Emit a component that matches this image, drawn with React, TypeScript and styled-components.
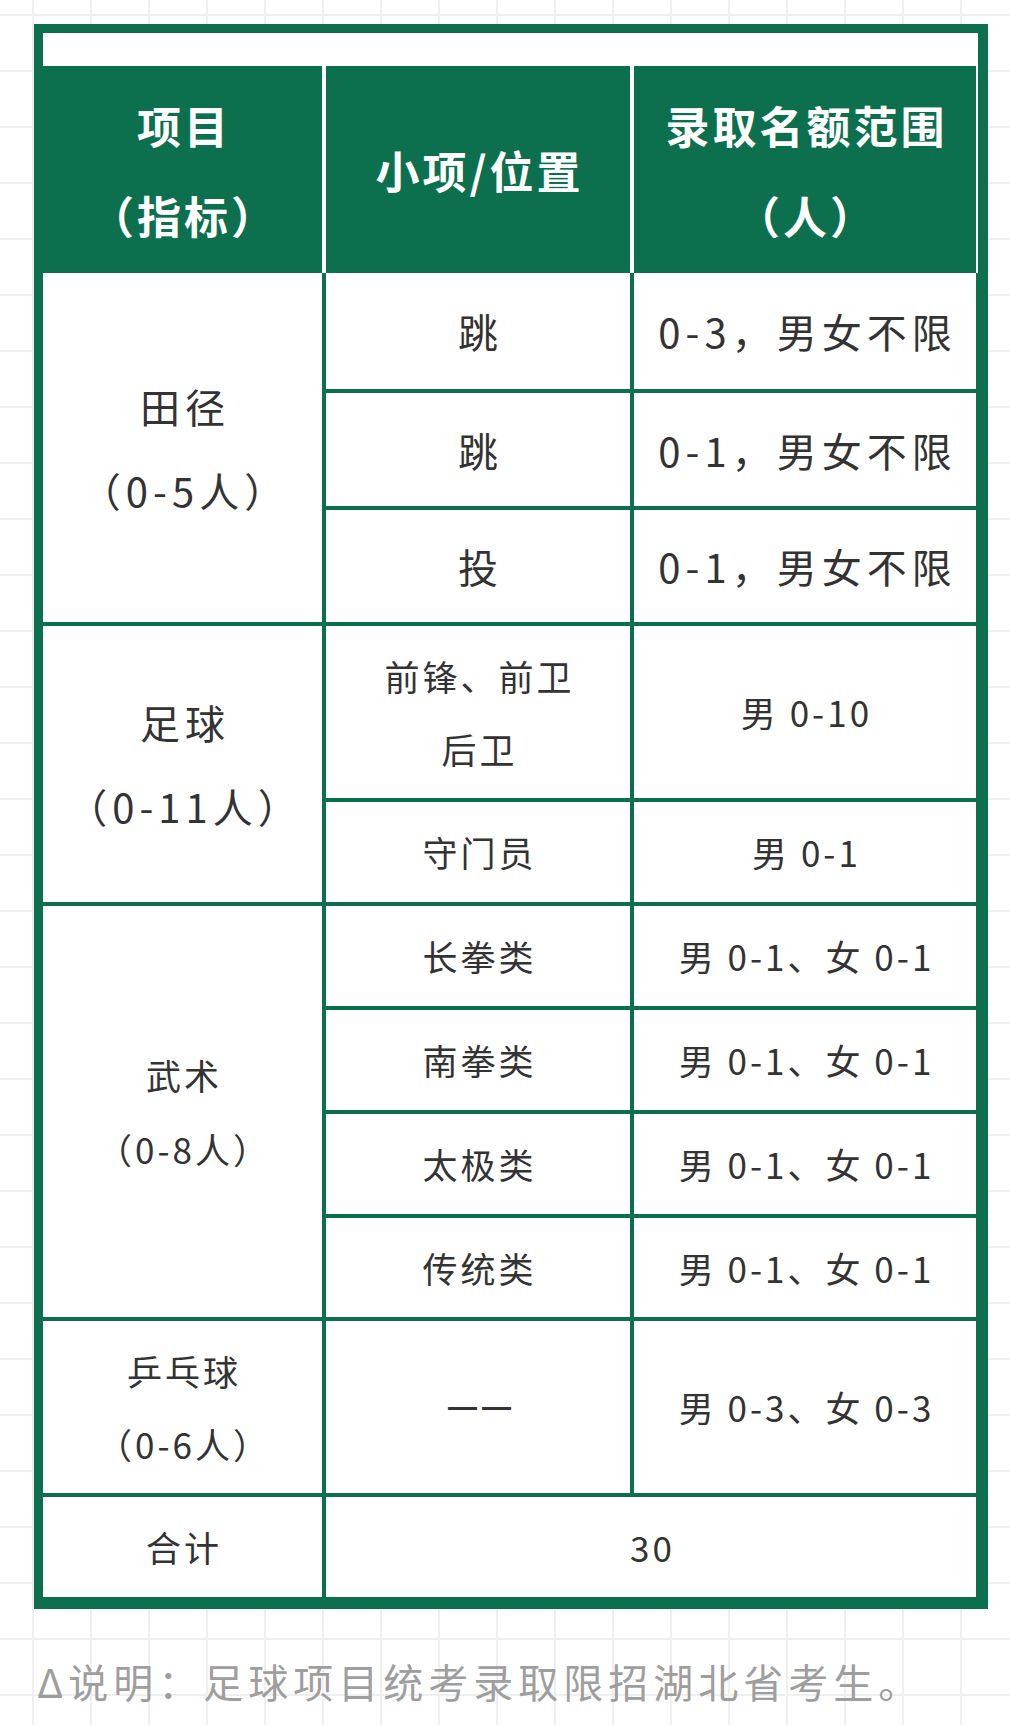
import React from "react"
import styled, { createGlobalStyle } from "styled-components"

const green = "#0c6f4d"

const GlobalStyle = createGlobalStyle`
  html, body {
    margin: 0;
    padding: 0;
  }
  body {
    min-height: 1725px;
    background-color: #fff;
    background-image:
      linear-gradient(to right, #efefef 2px, transparent 2px),
      linear-gradient(to bottom, #efefef 2px, transparent 2px);
    background-size: 58px 56px;
    background-position: 32px 14px;
    font-family: "Noto Sans CJK SC", "Noto Sans", sans-serif;
  }
`

type Row = { sub: string[]; quota: string[] }
type Group = { name: string[]; size: number; subSize: number; rows: Row[] }

const groups: Group[] = [
  {
    name: ["田径", "（0-5人）"],
    size: 40,
    subSize: 40,
    rows: [
      { sub: ["跳"], quota: ["0-3，男女不限"] },
      { sub: ["跳"], quota: ["0-1，男女不限"] },
      { sub: ["投"], quota: ["0-1，男女不限"] },
    ],
  },
  {
    name: ["足球", "（0-11人）"],
    size: 40,
    subSize: 35,
    rows: [
      { sub: ["前锋、前卫", "后卫"], quota: ["男 0-10"] },
      { sub: ["守门员"], quota: ["男 0-1"] },
    ],
  },
  {
    name: ["武术", "（0-8人）"],
    size: 35,
    subSize: 35,
    rows: [
      { sub: ["长拳类"], quota: ["男 0-1、女 0-1"] },
      { sub: ["南拳类"], quota: ["男 0-1、女 0-1"] },
      { sub: ["太极类"], quota: ["男 0-1、女 0-1"] },
      { sub: ["传统类"], quota: ["男 0-1、女 0-1"] },
    ],
  },
  {
    name: ["乒乓球", "（0-6人）"],
    size: 35,
    subSize: 35,
    rows: [{ sub: ["——"], quota: ["男 0-3、女 0-3"] }],
  },
]

const Lines = ({ lines }: { lines: string[] }) => (
  <>
    {lines.map((l, i) =>
      l === "——" ? <Dash key={i}>{l}</Dash> : <Line key={i}>{l}</Line>
    )}
  </>
)

export default function App() {
  return (
    <>
      <GlobalStyle />
      <Page>
        <Frame>
          <HeaderRow>
            <HeadCell>
              <Lines lines={["项目", "（指标）"]} />
            </HeadCell>
            <HeadCell>
              <Lines lines={["小项/位置"]} />
            </HeadCell>
            <HeadCell>
              <Lines lines={["录取名额范围", "（人）"]} />
            </HeadCell>
          </HeaderRow>
          <Body>
            {groups.map((g, gi) => (
              <React.Fragment key={gi}>
                <Cell $col={1} $rows={g.rows.length} $size={g.size}>
                  <Lines lines={g.name} />
                </Cell>
                {g.rows.map((r, ri) => (
                  <React.Fragment key={ri}>
                    <Cell $col={2} $size={g.subSize}>
                      <Lines lines={r.sub} />
                    </Cell>
                    <Cell $col={3} $size={g.subSize}>
                      <Lines lines={r.quota} />
                    </Cell>
                  </React.Fragment>
                ))}
              </React.Fragment>
            ))}
            <Cell $col={1} $size={35}>
              <Line>合计</Line>
            </Cell>
            <Cell $col={2} $cols={2} $size={35}>
              <Line>30</Line>
            </Cell>
          </Body>
        </Frame>
        <Note>Δ说明：足球项目统考录取限招湖北省考生。</Note>
      </Page>
    </>
  )
}

const Page = styled.div`
  box-sizing: border-box;
  min-height: 1725px;
  padding: 24px 0 0 34px;
`

const Frame = styled.div`
  box-sizing: border-box;
  width: 954px;
  border: solid ${green};
  border-width: 9px 10px 10px 9px;
  padding-top: 33px;
  background: #fff;
`

const columns = "279px 304px 342px"

const HeaderRow = styled.div`
  display: grid;
  grid-template-columns: ${columns};
  column-gap: 4px;
  height: 207px;
  padding-right: 2px;
  background: #fff;
`

const HeadCell = styled.div`
  display: flex;
  flex-direction: column;
  align-items: center;
  justify-content: center;
  background: ${green};
  color: #fff;
  font-size: 44px;
  font-weight: 700;
  line-height: 90px;
  letter-spacing: 3px;
  padding-left: 3px;
`

const Body = styled.div`
  display: grid;
  grid-template-columns: ${columns};
  grid-template-rows: 116px 113px 112px 172px 100px 100px 100px 100px 99px 172px 100px;
  gap: 4px;
  padding: 0 2px 2px 0;
  background: ${green};
`

type CellProps = { $col: number; $cols?: number; $rows?: number; $size: number }
const Cell = styled.div<CellProps>`
  grid-column: ${(p) => p.$col} / span ${(p) => p.$cols ?? 1};
  grid-row: span ${(p) => p.$rows ?? 1};
  display: flex;
  flex-direction: column;
  align-items: center;
  justify-content: center;
  background: #fff;
  color: #333;
  font-size: ${(p) => p.$size}px;
  line-height: 2.1;
  letter-spacing: ${(p) => (p.$size >= 40 ? 5 : 3)}px;
  padding-left: ${(p) => (p.$size >= 40 ? 5 : 3)}px;
`

const Line = styled.div`
  white-space: nowrap;
`

const Dash = styled.div`
  white-space: nowrap;
  font-family: "Liberation Sans", Arial, sans-serif;
  font-variant-ligatures: none;
  font-size: 29px;
  font-weight: 700;
  letter-spacing: 5px;
  padding-left: 5px;
  line-height: 73px;
`

const Note = styled.div`
  margin-top: 44px;
  padding-left: 3px;
  font-size: 40px;
  line-height: 56px;
  letter-spacing: 5px;
  color: #9e9e9e;
  white-space: nowrap;
`
